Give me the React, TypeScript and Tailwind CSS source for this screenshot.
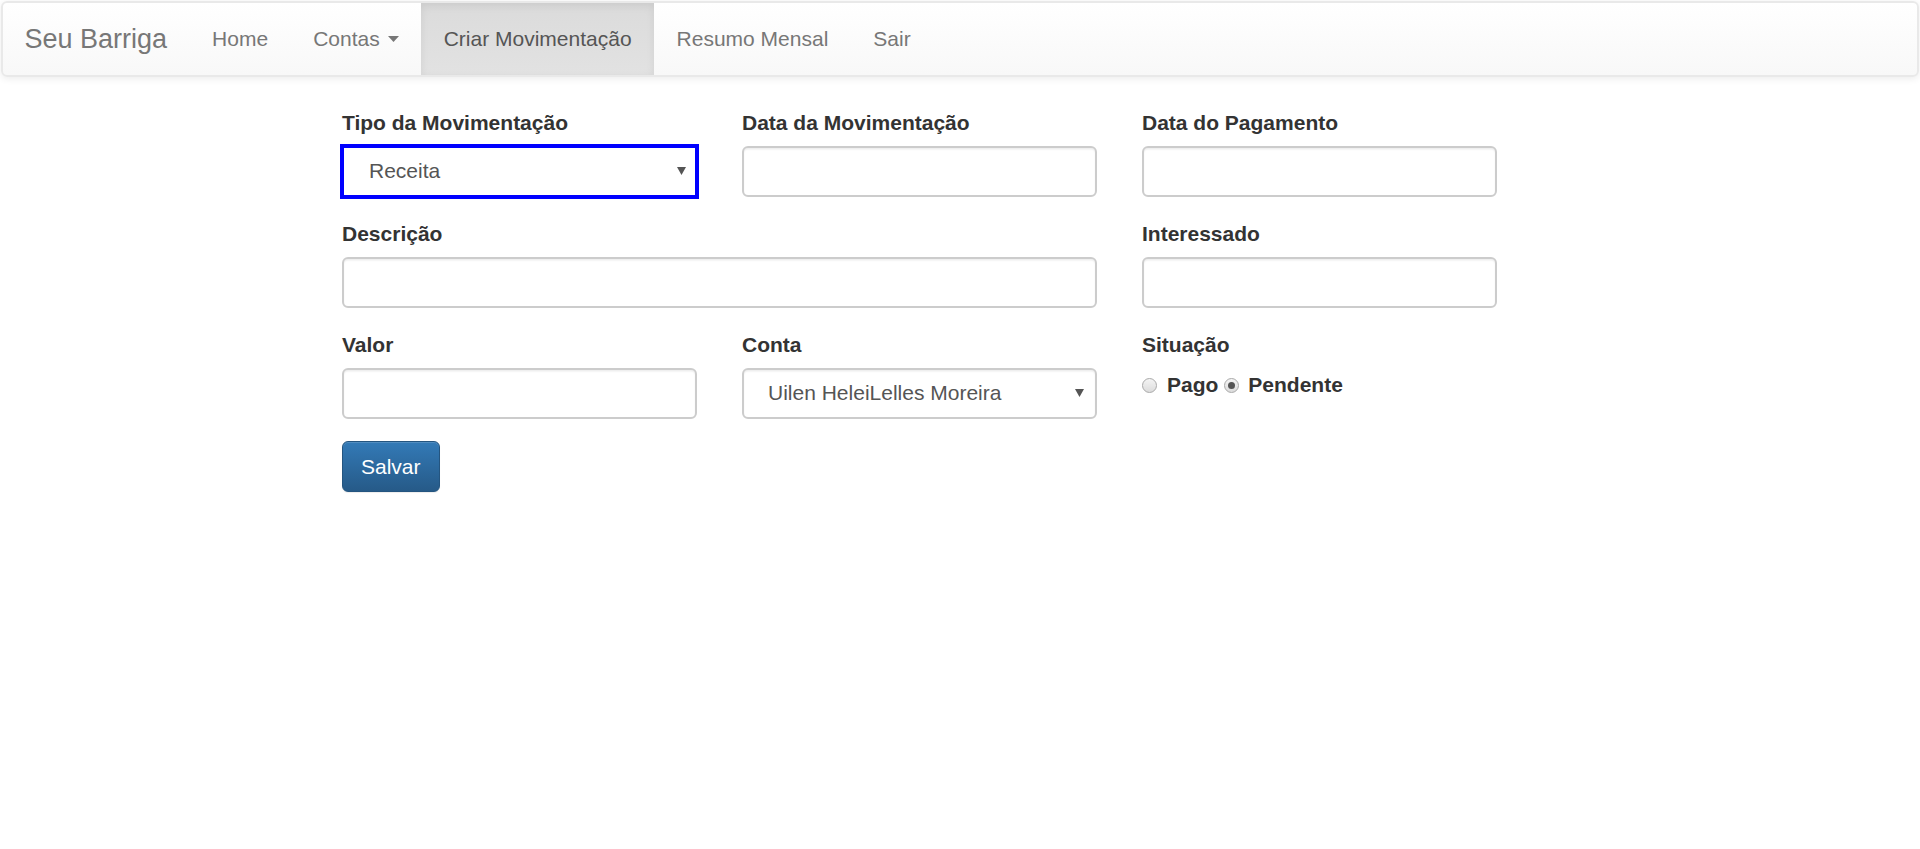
const font = { fontFamily: '"Liberation Sans", Arial, sans-serif' };

const Caret = () => (
  <svg width="11" height="6" viewBox="0 0 11 6" className="ml-[8px] inline-block">
    <path d="M0 0 L11 0 L5.5 6 Z" fill="#777" />
  </svg>
);

const SelectArrow = () => (
  <svg width="9" height="8" viewBox="0 0 9 8">
    <path d="M0 0 L9 0 L4.5 8 Z" fill="#555" />
  </svg>
);

const Label = ({ children }: { children: string }) => (
  <label className="block h-[30px] leading-[30px] mb-[7.5px] text-[21px] font-bold text-[#333]">{children}</label>
);

const Input = () => (
  <div className="h-[51px] w-full rounded-[6px] border-2 border-[#cccccc] bg-white shadow-[inset_0_1.5px_1.5px_rgba(0,0,0,0.075)]" />
);

const Radio = ({ checked }: { checked?: boolean }) => (
  <span className="flex h-[15px] w-[15px] items-center justify-center rounded-full border border-[#a9a9a9] bg-gradient-to-b from-[#f4f4f4] to-[#dcdcdc]">
    {checked && <span className="h-[7px] w-[7px] rounded-full bg-[#555]" />}
  </span>
);

const NavLink = ({ children, active }: { children: React.ReactNode; active?: boolean }) => (
  <a
    className={
      active
        ? "flex h-full items-center px-[22.5px] text-[21px] text-[#555] bg-gradient-to-b from-[#dbdbdb] to-[#e2e2e2] shadow-[inset_0_3px_9px_rgba(0,0,0,0.075)]"
        : "flex h-full items-center px-[22.5px] text-[21px] text-[#777]"
    }
  >
    {children}
  </a>
);

export default function App() {
  return (
    <div className="min-h-screen bg-white" style={font}>
      <nav className="mx-px mt-px flex h-[76px] items-stretch rounded-[6px] border-2 border-[#e9e9e9] bg-gradient-to-b from-white to-[#f8f8f8] shadow-[0_1.5px_7px_rgba(0,0,0,0.075)]">
        <a className="flex items-center pl-[21.5px] pr-[22.5px] text-[27px] text-[#777]">Seu Barriga</a>
        <NavLink>Home</NavLink>
        <NavLink>
          Contas
          <Caret />
        </NavLink>
        <NavLink active>Criar Movimentação</NavLink>
        <NavLink>Resumo Mensal</NavLink>
        <NavLink>Sair</NavLink>
      </nav>

      <form className="ml-[342px] mt-[31px] w-[1155px]">
        <div className="grid grid-cols-[355px_355px_355px] gap-x-[45px]">
          <div className="mb-[22.5px]">
            <Label>Tipo da Movimentação</Label>
            <div className="flex h-[51px] w-full items-center justify-between border-2 border-[#0000ff] shadow-[0_0_0_2px_#0000ff] bg-white pl-[25px] pr-[9px] text-[21px] text-[#555]">
              <span>Receita</span>
              <SelectArrow />
            </div>
          </div>
          <div className="mb-[22.5px]">
            <Label>Data da Movimentação</Label>
            <Input />
          </div>
          <div className="mb-[22.5px]">
            <Label>Data do Pagamento</Label>
            <Input />
          </div>

          <div className="col-span-2 mb-[22.5px]">
            <Label>Descrição</Label>
            <Input />
          </div>
          <div className="mb-[22.5px]">
            <Label>Interessado</Label>
            <Input />
          </div>

          <div className="mb-[22.5px]">
            <Label>Valor</Label>
            <Input />
          </div>
          <div className="mb-[22.5px]">
            <Label>Conta</Label>
            <div className="flex h-[51px] w-full items-center justify-between rounded-[6px] border-2 border-[#cccccc] bg-white pl-[24px] pr-[11px] text-[21px] text-[#555] shadow-[inset_0_1.5px_1.5px_rgba(0,0,0,0.075)]">
              <span>Uilen HeleiLelles Moreira</span>
              <SelectArrow />
            </div>
          </div>
          <div className="mb-[22.5px]">
            <Label>Situação</Label>
            <div className="flex h-[35px] items-center text-[21px] font-bold text-[#333]">
              <Radio />
              <span className="ml-[10px]">Pago</span>
              <span className="ml-[6px]">
                <Radio checked />
              </span>
              <span className="ml-[9px]">Pendente</span>
            </div>
          </div>
        </div>

        <button
          type="button"
          className="h-[51px] rounded-[6px] border-[1.5px] border-[#245580] bg-gradient-to-b from-[#337ab7] to-[#265a88] px-[18px] text-[21px] text-white shadow-[inset_0_1px_0_rgba(255,255,255,0.15),0_1px_1px_rgba(0,0,0,0.075)]"
        >
          Salvar
        </button>
      </form>
    </div>
  );
}
